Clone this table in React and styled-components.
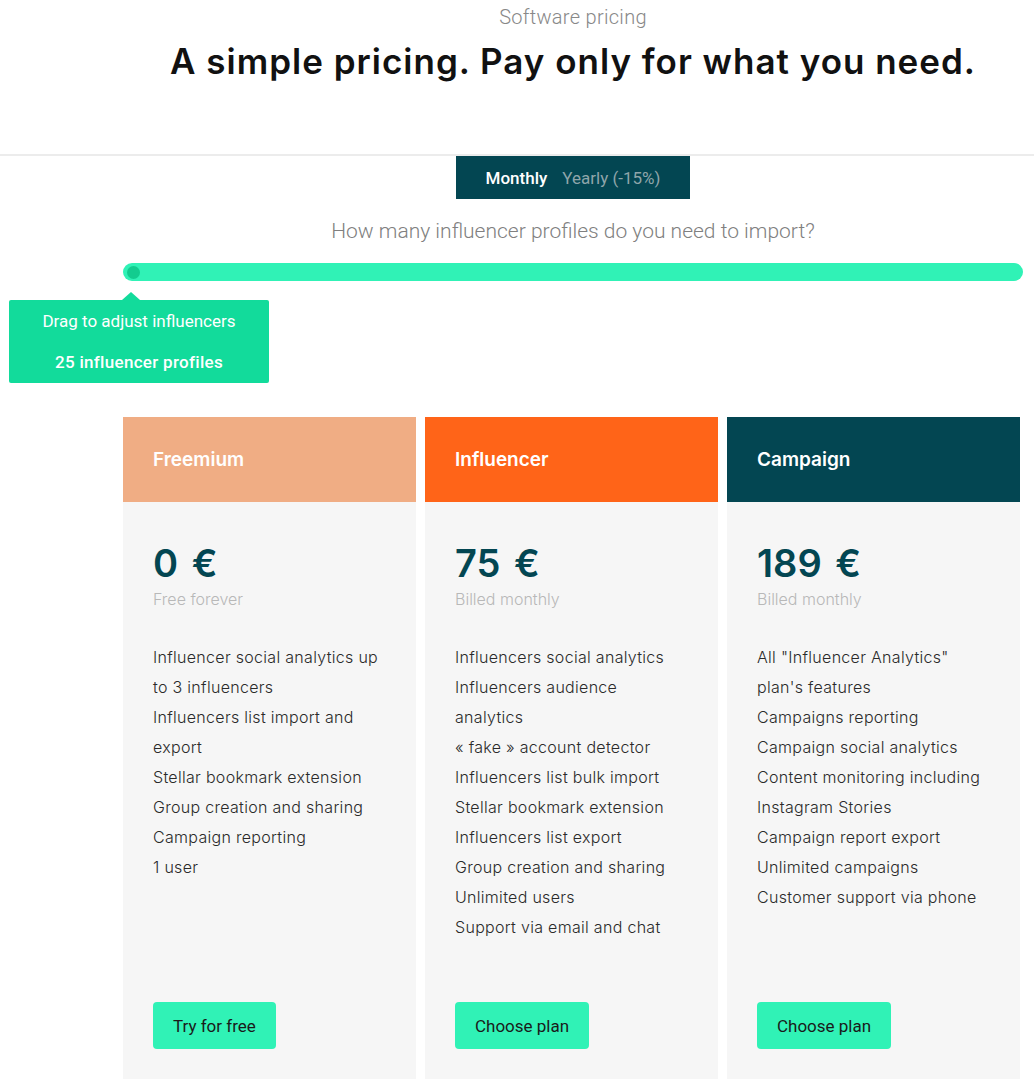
import styled, { createGlobalStyle } from "styled-components";

const GlobalStyle = createGlobalStyle`
  body {
    margin: 0;
    background: #fff;
    font-family: "Inter", "Liberation Sans", sans-serif;
  }
`;

const Page = styled.div`
  padding-left: 123px;
  width: 900px;
`;

const Header = styled.header`
  text-align: center;
  height: 154px;
  border-bottom: 2px solid #ececec;
  width: 100vw;
  margin-left: -123px;
  padding-left: 123px;
  box-sizing: content-box;
  max-width: 900px;
  padding-right: calc(100vw - 1023px);
`;

const Eyebrow = styled.p`
  margin: 0;
  padding-top: 5px;
  font-family: "Roboto", sans-serif;
  font-weight: 300;
  font-size: 20px;
  letter-spacing: 0.3px;
  line-height: 24px;
  color: #888;
`;

const Title = styled.h1`
  margin: 11px 0 0;
  font-size: 35px;
  font-weight: 600;
  letter-spacing: 1px;
  color: #111;
`;

const ToggleRow = styled.div`
  display: flex;
  justify-content: center;
`;

const Toggle = styled.div`
  display: flex;
  align-items: center;
  gap: 15px;
  height: 43px;
  padding: 0 30px;
  background: #034652;
  font-family: "Roboto", sans-serif;
  font-size: 17px;
`;

const ToggleOption = styled.span`
  color: ${(p) => (p.$active ? "#fff" : "#8fa5aa")};
  font-weight: ${(p) => (p.$active ? 500 : 400)};
`;

const Question = styled.p`
  margin: 20px 0 0;
  text-align: center;
  font-family: "Roboto", sans-serif;
  font-weight: 300;
  font-size: 21px;
  line-height: 24px;
  color: #808080;
`;

const SliderWrap = styled.div`
  position: relative;
  margin-top: 20px;
  height: 154px;
`;

const Track = styled.div`
  height: 18px;
  border-radius: 9px;
  background: #30f2b6;
  display: flex;
  align-items: center;
  padding-left: 4px;
`;

const Thumb = styled.div`
  width: 13px;
  height: 13px;
  border-radius: 50%;
  background: #13cc8f;
`;

const Tip = styled.div`
  position: absolute;
  left: -114px;
  top: 37px;
  width: 260px;
  height: 83px;
  background: #12db9b;
  border-radius: 2px;
  color: #fff;
  font-family: "Roboto", sans-serif;
  font-size: 17px;
  text-align: center;
  display: flex;
  flex-direction: column;
  justify-content: center;
  gap: 21px;
  &::before {
    content: "";
    position: absolute;
    top: -8px;
    left: 113px;
    border-left: 9px solid transparent;
    border-right: 9px solid transparent;
    border-bottom: 8px solid #12db9b;
  }
`;

const TipStrong = styled.span`
  font-weight: 500;
  letter-spacing: 0.3px;
`;

const Cards = styled.div`
  display: grid;
  grid-template-columns: repeat(3, 293px);
  gap: 9px;
`;

const Card = styled.section`
  display: flex;
  flex-direction: column;
  min-height: 662px;
  background: #f6f6f6;
`;

const CardHead = styled.div`
  height: 85px;
  display: flex;
  align-items: center;
  padding: 0 30px;
  background: ${(p) => p.$color};
  color: #fff;
  font-size: 19px;
  font-weight: 600;
`;

const CardBody = styled.div`
  flex: 1;
  display: flex;
  flex-direction: column;
  padding: 38px 30px 30px;
`;

const Price = styled.div`
  font-size: 38px;
  font-weight: 600;
  color: #034652;
  line-height: 46px;
  word-spacing: 4px;
`;

const Billing = styled.div`
  font-size: 16px;
  font-weight: 300;
  color: #b8b8b8;
  line-height: 20px;
  margin-top: 3px;
`;

const Features = styled.ul`
  list-style: none;
  margin: 33px 0 0;
  padding: 0;
  font-size: 16px;
  font-weight: 300;
  letter-spacing: 0.3px;
  line-height: 30px;
  color: #2a2a2a;
`;

const Button = styled.button`
  margin-top: auto;
  align-self: flex-start;
  height: 47px;
  padding: 0 20px;
  border: none;
  border-radius: 4px;
  background: #30f2b6;
  color: #1a1a1a;
  font-family: "Roboto", sans-serif;
  font-size: 17px;
  cursor: pointer;
`;

const plans = [
  {
    name: "Freemium",
    color: "#f0ad84",
    price: "0 €",
    billing: "Free forever",
    cta: "Try for free",
    features: [
      "Influencer social analytics up to 3 influencers",
      "Influencers list import and export",
      "Stellar bookmark extension",
      "Group creation and sharing",
      "Campaign reporting",
      "1 user",
    ],
  },
  {
    name: "Influencer",
    color: "#ff6418",
    price: "75 €",
    billing: "Billed monthly",
    cta: "Choose plan",
    features: [
      "Influencers social analytics",
      "Influencers audience analytics",
      "« fake » account detector",
      "Influencers list bulk import",
      "Stellar bookmark extension",
      "Influencers list export",
      "Group creation and sharing",
      "Unlimited users",
      "Support via email and chat",
    ],
  },
  {
    name: "Campaign",
    color: "#034652",
    price: "189 €",
    billing: "Billed monthly",
    cta: "Choose plan",
    features: [
      'All "Influencer Analytics" plan\'s features',
      "Campaigns reporting",
      "Campaign social analytics",
      "Content monitoring including Instagram Stories",
      "Campaign report export",
      "Unlimited campaigns",
      "Customer support via phone",
    ],
  },
];

export default function App() {
  return (
    <>
      <GlobalStyle />
      <Page>
        <Header>
          <Eyebrow>Software pricing</Eyebrow>
          <Title>A simple pricing. Pay only for what you need.</Title>
        </Header>
        <ToggleRow>
          <Toggle>
            <ToggleOption $active>Monthly</ToggleOption>
            <ToggleOption>Yearly (-15%)</ToggleOption>
          </Toggle>
        </ToggleRow>
        <Question>How many influencer profiles do you need to import?</Question>
        <SliderWrap>
          <Track>
            <Thumb />
          </Track>
          <Tip>
            <span>Drag to adjust influencers</span>
            <TipStrong>25 influencer profiles</TipStrong>
          </Tip>
        </SliderWrap>
        <Cards>
          {plans.map((plan) => (
            <Card key={plan.name}>
              <CardHead $color={plan.color}>{plan.name}</CardHead>
              <CardBody>
                <Price>{plan.price}</Price>
                <Billing>{plan.billing}</Billing>
                <Features>
                  {plan.features.map((f) => (
                    <li key={f}>{f}</li>
                  ))}
                </Features>
                <Button>{plan.cta}</Button>
              </CardBody>
            </Card>
          ))}
        </Cards>
      </Page>
    </>
  );
}
